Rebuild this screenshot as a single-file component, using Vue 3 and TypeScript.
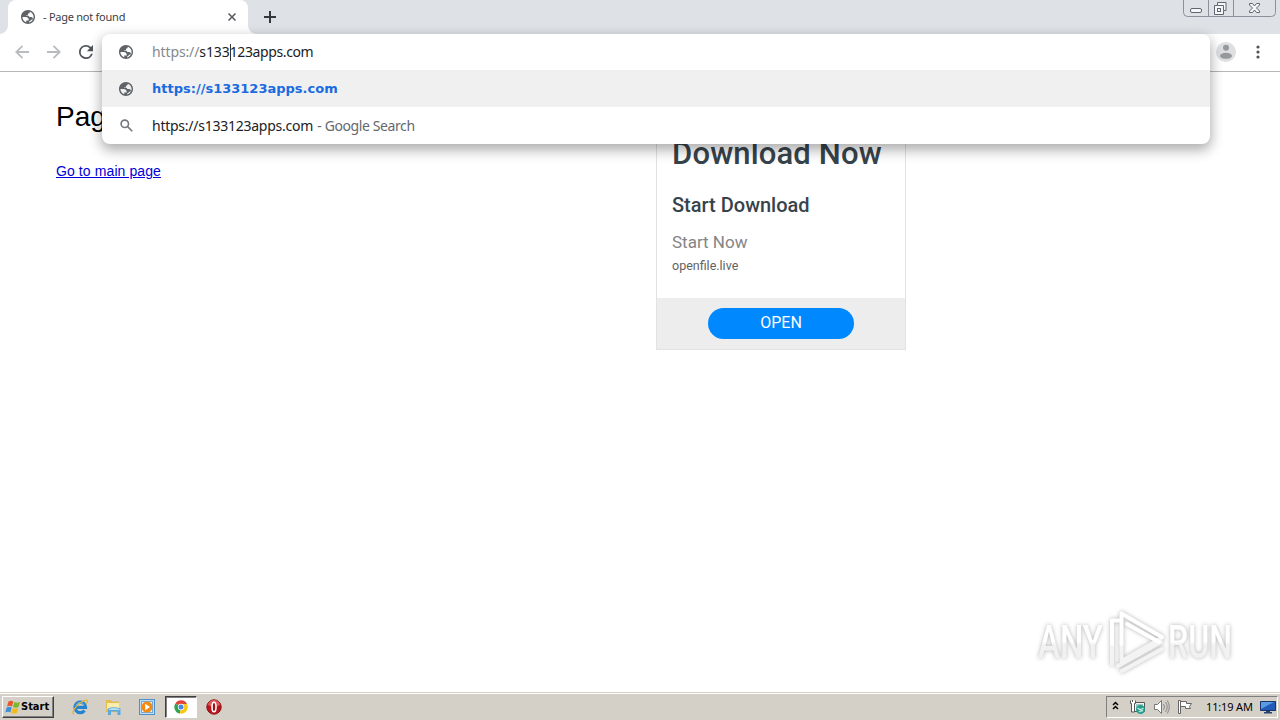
<script setup lang="ts">
interface Suggestion {
  id: string
  icon: 'globe' | 'search'
  text: string
  hint: string
  active: boolean
}

const suggestions: Suggestion[] = [
  { id: 'url', icon: 'globe', text: 'https://s133123apps.com', hint: '', active: true },
  { id: 'search', icon: 'search', text: 'https://s133123apps.com', hint: ' - Google Search', active: false },
]

const globePath =
  'M12 2C6.48 2 2 6.48 2 12s4.48 10 10 10 10-4.48 10-10S17.52 2 12 2zM4 12h4.4c3.4 0 4.9 1.7 4.6 5.1H9.5v2.5C6.300 18.500 4 15.500 4 12zm9.500 7.850V18.500c1.500 0 2.500-1 2.500-2.500h1.500c.8 0 1.500-.7 1.500-1.500 0-1.400-1.100-2.500-2.500-2.500H14c-.8-1.300-1.800-2-3-2-1 0-1.700-.3-2-1h3V7.500c1.500 0 2.500-1 2.500-2.500v-.6C17.700 5.400 20 8.400 20 12c0 3.900-2.800 7.150-6.500 7.850z'
</script>

<template>
  <div class="screen">
    <header class="strip">
      <div class="tab">
        <svg class="globe" viewBox="2 2 20 20"><path :d="globePath" /></svg>
        <span class="tab-title">- Page not found</span>
        <svg class="close" viewBox="0 0 8 8"><path d="M.5.5l7 7M7.5.5l-7 7" /></svg>
      </div>
      <svg class="plus" viewBox="0 0 12 12"><path d="M6 0v12M0 6h12" /></svg>
      <div class="controls">
        <svg viewBox="0 0 94 17">
          <path class="frame" d="M.5 0v12.500q0 4 4 4h84q4 0 4-4V0M25.500 0v16M50.500 0v16" />
          <rect class="glyph" x="7.500" y="8.500" width="11" height="4" rx="1.500" />
          <path class="glyph" d="M34.500 2.500h8.500v8h-2.500v4h-9v-9h3z" />
          <path class="glyph" d="M34.500 5.500h6v5" />
          <rect class="glyph" x="34.500" y="8.500" width="3" height="3" />
          <path class="glyph" d="M66.500 3.500h3l2 2.500 2-2.500h3v1.500L73.500 8l3 3v1.500h-3l-2-2.500-2 2.500h-3V11l3-3-3-3z" />
        </svg>
      </div>
    </header>

    <nav class="toolbar">
      <svg class="nav back" viewBox="0 0 14 14"><path d="M14 7H1.500M7.500.8L1.300 7l6.200 6.200" /></svg>
      <svg class="nav forward" viewBox="0 0 14 14"><path d="M0 7h12.500M6.500.8L12.700 7l-6.200 6.200" /></svg>
      <svg class="reload" viewBox="4 4 16 16">
        <path d="M17.650 6.350A7.960 7.960 0 0 0 12 4a8 8 0 1 0 7.730 10h-2.080A6 6 0 1 1 12 6c1.660 0 3.140.69 4.220 1.780L13 11h7V4z" />
      </svg>
      <span class="grow"></span>
      <svg class="avatar" viewBox="0 0 20 20">
        <circle class="disc" cx="10" cy="10" r="10" />
        <circle cx="10" cy="5.800" r="3" />
        <ellipse cx="10" cy="13.800" rx="6" ry="3" />
      </svg>
      <svg class="dots" viewBox="0 0 4 14">
        <circle cx="2" cy="2" r="1.600" /><circle cx="2" cy="7" r="1.600" /><circle cx="2" cy="12" r="1.600" />
      </svg>
    </nav>

    <section class="omnibox">
      <div class="row entry">
        <svg class="globe" viewBox="2 2 20 20"><path :d="globePath" /></svg>
        <span class="url"><span class="scheme">https://</span><span class="typed">s133</span><i class="caret"></i>123apps.com</span>
      </div>
      <div v-for="item in suggestions" :key="item.id" class="row" :class="{ active: item.active }">
        <svg v-if="item.icon === 'globe'" class="globe" viewBox="2 2 20 20"><path :d="globePath" /></svg>
        <svg v-else class="lens" viewBox="0 0 13 13"><circle cx="4.800" cy="4.800" r="3.700" /><path d="M7.600 7.600l4.700 4.700" /></svg>
        <span class="url">{{ item.text }}</span>
        <span v-if="item.hint" class="hint">{{ item.hint }}</span>
      </div>
    </section>

    <main class="page">
      <div class="message">
        <h1>Page</h1>
        <a class="link">Go to main page</a>
      </div>
      <aside class="ad">
        <div class="ad-body">
          <div class="ad-title">Download Now</div>
          <div class="ad-sub">Start Download</div>
          <div class="ad-text">Start Now</div>
          <div class="ad-site">openfile.live</div>
        </div>
        <div class="ad-foot"><button class="open">OPEN</button></div>
      </aside>
      <svg class="watermark" viewBox="0 0 210 76">
        <defs>
          <linearGradient id="fade" x1="0" y1="0" x2="0" y2="1">
            <stop offset="0.500" stop-color="#fff" /><stop offset="0.560" stop-color="#f1f1f1" />
          </linearGradient>
        </defs>
        <g class="mark">
          <text x="8" y="54" textLength="65" lengthAdjust="spacingAndGlyphs">ANY</text>
          <text x="138" y="54" textLength="64" lengthAdjust="spacingAndGlyphs">RUN</text>
          <path class="lower" d="M82 38V60M91.500 38V54M91.500 57l40-23M88 62l43-24M92 67l40-22" />
          <path d="M91.500 40V9.500L132 33M89 16.500H82V40M97 20l32 18" />
        </g>
      </svg>
    </main>

    <footer class="taskbar">
      <button class="start">
        <svg viewBox="0 0 16 14">
          <path fill="#e8562a" d="M3.500 1.500Q6 0 8.300 1.500L7 6.500Q4.500 5.200 2 6.500z" />
          <path fill="#78b82a" d="M9.300 2Q12 3.300 15 2l-1.500 5Q11 8.300 8 7z" />
          <path fill="#3c8fd8" d="M1.700 7.500Q4.200 6.200 6.700 7.500L5.400 12.500Q3 11.200.3 12.500z" />
          <path fill="#f3b91b" d="M7.700 8Q10.500 9.300 13.200 8l-1.400 5Q9 14.200 6.400 13z" />
        </svg>
        <span>Start</span>
      </button>
      <div class="apps">
        <div class="app">
          <svg viewBox="0 0 18 18">
            <path fill="none" stroke="#2484cf" stroke-width="3.200" d="M13.500 12.500A5.300 5.300 0 1 1 14.500 9.300H5" />
            <path fill="none" stroke="#79c3ef" stroke-width="1" d="M5 7.500q1-3 4-3t4 3" />
            <path fill="none" stroke="#e4b632" stroke-width="1.300" d="M3 16C-.5 15.500 5 7 10.500 4 15 1 18 1.500 15.500 5.500" />
          </svg>
        </div>
        <div class="app">
          <svg viewBox="0 0 18 18">
            <path fill="#e3bd50" d="M1 2h5l1 1.500h7V14H1z" /><path fill="#fbedaa" d="M2 5h12v6H2z" />
            <path fill="#5ba9dd" d="M3 10.500q5-2.500 12.500 0V17h-3v-3.500H6V17H3z" /><path fill="#b3def4" d="M4 11q4-2 10.500 0v1H4z" />
          </svg>
        </div>
        <div class="app">
          <svg viewBox="0 0 18 18">
            <rect x="1.500" y="1.500" width="15" height="15" fill="#c2def4" stroke="#4c91cc" />
            <rect x="3.500" y="3.500" width="11" height="11" fill="#e3eff9" stroke="#72a9d8" />
            <circle cx="9" cy="9" r="5.500" fill="#f38a13" /><path fill="#fff" d="M7.200 5.800v6.400L12 9z" />
          </svg>
        </div>
        <div class="app pressed">
          <svg viewBox="0 0 18 18">
            <path fill="#e24435" d="M9 9L3.400 5.600A6.600 6.600 0 0 1 15 6H9z" />
            <path fill="#32a350" d="M9 9l-1 6.600A6.600 6.600 0 0 1 3.300 5.600z" />
            <path fill="#fbc915" d="M9 9V6h6a6.600 6.600 0 0 1-7 9.600z" />
            <circle cx="9" cy="9" r="3.200" fill="#fff" /><circle cx="9" cy="9" r="2.500" fill="#4688e8" />
          </svg>
        </div>
        <div class="app">
          <svg viewBox="0 0 18 18">
            <circle cx="9" cy="9" r="7.200" fill="#b8161c" stroke="#8e1014" />
            <path fill="#dc5a5a" d="M3 7a6 5 0 0 1 12 0q-6 3-12 0z" />
            <ellipse cx="9" cy="9" rx="2" ry="4.800" fill="#9b1517" stroke="#fff" stroke-width="1.600" />
          </svg>
        </div>
      </div>
      <span class="grow"></span>
      <div class="tray">
        <svg class="chev" viewBox="0 0 7 9"><path d="M1 4l2.500-2.500L6 4M1 8l2.500-2.500L6 8" /></svg>
        <svg class="net" viewBox="0 0 17 16">
          <path fill="#f5f5f2" stroke="#555" d="M5.500 3.500h10v9h-10z" /><path fill="#9ac9c4" d="M7 5h7v6H7z" />
          <path fill="#fff" stroke="#555" d="M1.500 1.500v3h1v8.500h3V4.500h1v-3M3.500 1v2" />
          <circle cx="11.500" cy="10.500" r="4.500" fill="#279b8e" /><path fill="none" stroke="#b4e8d6" stroke-width="1.500" d="M8.500 9q3 3 6 0M10 13q2-2 4-1" />
        </svg>
        <svg class="vol" viewBox="0 0 17 16">
          <path fill="#fff" stroke="#777" d="M1.500 5.500h3l4-4v13l-4-4h-3z" />
          <path fill="none" stroke="#888" d="M10.500 5q2 3 0 6M12.500 3q3.500 5 0 10M14.300 1.500q4 6.500 0 13" />
        </svg>
        <svg class="flag" viewBox="0 0 16 16">
          <path fill="#fff" stroke="#666" d="M1.500 1.500h2v13h-2zM3.500 2.500h6v2h5l-2 3 1 2H8.500v-2h-5z" />
        </svg>
        <span class="clock">11:19 AM</span>
        <svg class="desktop" viewBox="0 0 16 14">
          <path fill="#235ab8" stroke="#17356b" d="M.5 1.500h15v9H.5z" /><path fill="#5a9be5" d="M1 2h13L1 9z" />
          <path fill="#26446f" d="M6 11h4v1h2v1.500H4V12h2z" />
        </svg>
      </div>
    </footer>
  </div>
</template>

<style>
body {
  overflow: hidden;
}
</style>

<style scoped>
.screen {
  position: relative;
  display: flex;
  flex-direction: column;
  width: 1280px;
  height: 720px;
  overflow: hidden;
  background: #fff;
  font-family: "Noto Sans", "DejaVu Sans", sans-serif;
}
svg {
  display: block;
  flex: none;
}
button {
  border: 0;
  padding: 0;
}
.grow {
  flex: 1;
}
.strip {
  display: flex;
  height: 34px;
  background: #dee1e6;
}
.tab {
  position: relative;
  display: flex;
  align-items: center;
  box-sizing: border-box;
  width: 240px;
  height: 34px;
  margin-left: 8px;
  padding: 0 12px 0 13px;
  border-radius: 8px 8px 0 0;
  background: #fff;
}
.tab::before,
.tab::after {
  content: "";
  position: absolute;
  bottom: 0;
  width: 8px;
  height: 8px;
}
.tab::before {
  left: -8px;
  background: radial-gradient(circle at 0 0, transparent 7.500px, #fff 8px);
}
.tab::after {
  right: -8px;
  background: radial-gradient(circle at 100% 0, transparent 7.500px, #fff 8px);
}
.globe {
  width: 14px;
  height: 14px;
  fill: #5f6368;
}
.tab-title {
  flex: 1;
  margin-left: 8px;
  color: #3c4043;
  font-size: 11px;
  letter-spacing: -0.250px;
  line-height: 34px;
}
.close {
  width: 8px;
  height: 8px;
  stroke: #54585d;
  stroke-width: 1.500;
}
.plus {
  width: 12px;
  height: 12px;
  margin: 11px 0 0 16px;
  stroke: #34373b;
  stroke-width: 2;
}
.controls {
  width: 94px;
  margin-left: auto;
  margin-right: 3px;
}
.controls svg {
  width: 94px;
  height: 17px;
}
.frame {
  fill: none;
  stroke: #8b919b;
}
.glyph {
  fill: #f6f7f9;
  stroke: #60666f;
}
.toolbar {
  display: flex;
  align-items: center;
  box-sizing: border-box;
  height: 38px;
  padding: 0 21px 2px 15px;
  border-bottom: 1px solid #b6b6b8;
}
.nav {
  width: 14px;
  height: 14px;
  margin-right: 18px;
  fill: none;
  stroke: #b9bbbe;
  stroke-width: 1.800;
}
.reload {
  width: 14px;
  height: 14px;
  fill: #505459;
}
.avatar {
  width: 20px;
  height: 20px;
  margin-right: 20px;
  fill: #96999c;
}
.disc {
  fill: #dedfe0;
}
.dots {
  width: 4px;
  height: 14px;
  margin-right: -1px;
  fill: #505459;
}
.omnibox {
  position: absolute;
  z-index: 2;
  top: 34px;
  left: 102px;
  width: 1108px;
  height: 110px;
  border-radius: 8px;
  background: #fff;
  box-shadow: 0 5px 13px 1px rgba(0, 0, 0, 0.330);
}
.row {
  display: flex;
  align-items: center;
  height: 37px;
  padding-left: 17px;
  color: #202124;
  font-size: 14px;
  letter-spacing: -0.250px;
  white-space: pre;
}
.entry {
  height: 36px;
}
.row .url {
  margin-left: 19px;
}
.entry .url {
  line-height: 18px;
  letter-spacing: -0.380px;
}
.entry .scheme {
  color: #85898d;
  letter-spacing: -0.120px;
}
.typed {
  letter-spacing: -0.100px;
}
.caret {
  display: inline-block;
  width: 1px;
  height: 17px;
  margin-right: -1px;
  background: #333;
  vertical-align: -4px;
}
.active {
  background: #f0f0f0;
  color: #1a6be0;
  font-family: "DejaVu Sans", sans-serif;
  font-size: 13px;
  font-weight: 700;
  letter-spacing: 0;
}
.lens {
  width: 13px;
  height: 13px;
  margin: -1px 0 0 1px;
  fill: none;
  stroke: #74787c;
  stroke-width: 1.600;
}
.hint {
  margin-left: 1px;
  color: #65696d;
  letter-spacing: -0.400px;
}
.page {
  display: flex;
  position: relative;
  height: 620px;
}
.message {
  width: 600px;
  padding-left: 56px;
  font-family: "Liberation Sans", Arial, sans-serif;
}
h1 {
  margin: 27px 0 0;
  font-size: 28px;
  font-weight: 400;
  line-height: 36px;
}
.link {
  display: block;
  margin-top: 26px;
  color: #0000d8;
  font-size: 14px;
  letter-spacing: 0.100px;
  line-height: 20px;
  text-decoration: underline;
}
.ad {
  display: flex;
  flex-direction: column;
  box-sizing: border-box;
  width: 250px;
  height: 278px;
  border: 1px solid #e2e2e2;
  font-family: Roboto, sans-serif;
}
.ad-body {
  height: 225px;
  padding-left: 15px;
}
.ad-title {
  margin-top: 61px;
  color: #37434b;
  font-size: 31px;
  font-weight: 500;
  letter-spacing: 0.150px;
  line-height: 40px;
}
.ad-sub {
  margin-top: 19px;
  color: #37434b;
  font-size: 20px;
  font-weight: 500;
  line-height: 24px;
}
.ad-text {
  margin-top: 15px;
  color: #858585;
  font-size: 17px;
  line-height: 20px;
}
.ad-site {
  margin-top: 6px;
  color: #626262;
  font-size: 12.500px;
  line-height: 16px;
}
.ad-foot {
  display: flex;
  justify-content: center;
  align-items: center;
  flex: 1;
  background: #ededed;
}
.open {
  width: 146px;
  height: 31px;
  padding: 0 0 2px;
  border-radius: 16px;
  background: #0088ff;
  color: #fff;
  font-family: Roboto, sans-serif;
  font-size: 16px;
  line-height: 28px;
}
.watermark {
  position: absolute;
  left: 1030px;
  top: 532px;
  width: 210px;
  height: 76px;
  overflow: visible;
  filter: drop-shadow(0 0 2px rgba(0, 0, 0, 0.300));
}
.mark text {
  fill: url(#fade);
  font-family: Roboto, sans-serif;
  font-size: 47px;
  font-weight: 500;
}
.mark path {
  fill: none;
  stroke: #fff;
  stroke-width: 4;
  stroke-linecap: round;
  stroke-linejoin: round;
}
.mark .lower {
  stroke: #f3f3f3;
}
.taskbar {
  display: flex;
  align-items: center;
  box-sizing: border-box;
  height: 28px;
  padding: 2px 2px 0;
  background: #d4d0c8;
  box-shadow: inset 0 1px #d4d0c8, inset 0 2px #fff;
}
.start {
  display: flex;
  align-items: center;
  box-sizing: border-box;
  width: 52px;
  height: 22px;
  padding-left: 2px;
  border: 1px solid;
  border-color: #fff #404040 #404040 #fff;
  background: #d4d0c8;
  box-shadow: inset -1px -1px #808080;
  color: #000;
  font: bold 11px/18px "DejaVu Sans Condensed", "DejaVu Sans", sans-serif;
}
.start svg {
  width: 16px;
  height: 14px;
}
.apps {
  display: flex;
  margin-left: 10px;
}
.app {
  display: flex;
  align-items: center;
  justify-content: center;
  box-sizing: border-box;
  width: 32px;
  height: 22px;
  margin-right: 1.600px;
}
.app svg {
  width: 18px;
  height: 18px;
}
.pressed {
  border: 1px solid;
  border-color: #404040 #fff #fff #404040;
  background: #fff;
  box-shadow: inset 1px 1px #808080;
}
.tray {
  display: flex;
  align-items: center;
  box-sizing: border-box;
  width: 172px;
  height: 22px;
  padding-left: 5px;
  border: 1px solid;
  border-color: #808080 #fff #fff #808080;
}
.chev {
  width: 7px;
  height: 9px;
  margin-bottom: 3px;
  fill: none;
  stroke: #000;
  stroke-width: 1.500;
}
.net {
  width: 17px;
  height: 16px;
  margin-left: 10px;
}
.vol {
  width: 17px;
  height: 16px;
  margin-left: 7px;
}
.flag {
  width: 16px;
  height: 16px;
  margin-left: 7px;
}
.clock {
  width: 47px;
  margin-left: 13px;
  color: #000;
  font-size: 11px;
  letter-spacing: -0.150px;
  line-height: 18px;
  white-space: nowrap;
}
.desktop {
  width: 16px;
  height: 14px;
  margin-left: 7px;
}
</style>
